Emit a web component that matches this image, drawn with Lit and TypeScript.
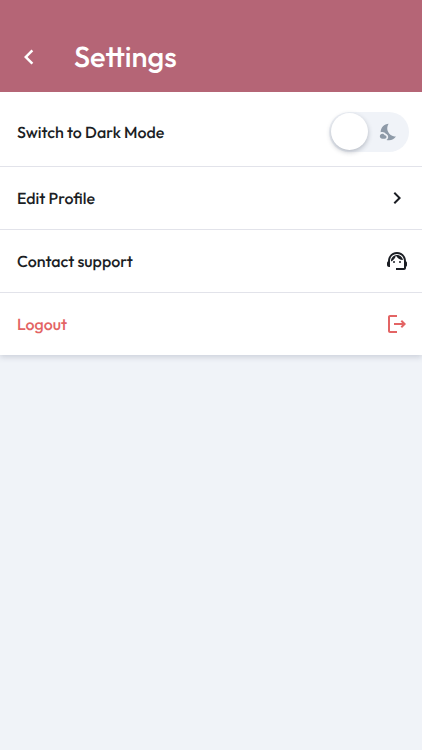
import { LitElement, html, css } from "lit";
import { customElement, state } from "lit/decorators.js";

@customElement("app-root")
export class AppRoot extends LitElement {
  static styles = css`
    :host {
      display: block;
      min-height: 100vh;
      background: #f0f3f8;
      color: #1b1e24;
      font-family: Outfit, Lato, "Liberation Sans", sans-serif;
      text-rendering: geometricPrecision;
    }
    * {
      box-sizing: border-box;
    }
    svg {
      display: block;
      fill: currentColor;
    }
    .header {
      position: relative;
      display: flex;
      align-items: center;
      gap: 30px;
      padding: 38px 14px 16px;
      background: #b56576;
      color: #fff;
      z-index: 1;
    }
    button {
      font: inherit;
      text-rendering: inherit;
      border: 0;
      background: none;
      color: inherit;
      cursor: pointer;
    }
    .back {
      padding: 0;
    }
    .title {
      margin: 0;
      font-size: 29px;
      line-height: 38px;
      font-weight: 500;
    }
    .list {
      margin: 0;
      padding: 0;
      list-style: none;
      background: #fff;
      box-shadow: 0 2px 6px rgba(50, 60, 90, 0.2);
    }
    .item + .item {
      border-top: 1px solid #e2e3ea;
    }
    .row {
      display: flex;
      align-items: center;
      justify-content: space-between;
      width: 100%;
      min-height: 62px;
      padding: 2px 13px 0 17px;
      font-size: 16px;
      line-height: 24px;
      font-weight: 500;
      text-align: left;
    }
    .tall {
      min-height: 74px;
      padding-top: 8px;
      cursor: pointer;
    }
    .danger {
      color: #e36464;
    }
    .row > svg {
      margin-bottom: 2px;
    }
    .switch {
      position: relative;
      display: flex;
      align-items: center;
      justify-content: flex-end;
      width: 80px;
      height: 40px;
      margin-bottom: 2px;
      padding-right: 10px;
      border-radius: 20px;
      background: #f0f3f8;
      color: #8e9aa8;
    }
    .switch input {
      position: absolute;
      inset: 0;
      width: 100%;
      height: 100%;
      margin: 0;
      opacity: 0;
      cursor: pointer;
    }
    .thumb {
      position: absolute;
      top: 1px;
      left: 2px;
      width: 37px;
      height: 37px;
      border-radius: 50%;
      background: #fff;
      box-shadow: 0 2px 5px rgba(40, 50, 70, 0.3);
      pointer-events: none;
    }
    .switch input:checked + .thumb {
      left: 41px;
    }
  `;

  @state() private dark = false;

  private toggle(e: Event) {
    this.dark = (e.target as HTMLInputElement).checked;
  }

  render() {
    return html`
      <header class="header">
        <button class="back" aria-label="Back">
          <svg width="30" height="30" viewBox="0 0 24 24">
            <path d="M15.41 7.41 14 6l-6 6 6 6 1.41-1.41L10.83 12z" />
          </svg>
        </button>
        <h1 class="title">Settings</h1>
      </header>
      <ul class="list">
        <li class="item">
          <label class="row tall">
            Switch to Dark Mode
            <span class="switch">
              <input type="checkbox" .checked=${this.dark} @change=${this.toggle} />
              <span class="thumb"></span>
              <svg width="20" height="20" viewBox="0 0 24 24">
                <path
                  d="M11.1 12.08c-2.33-4.51-.5-8.48.53-10.07C6.27 2.2 1.98 6.59 1.98 12c0 .14.02.28.02.42.62-.27 1.29-.42 2-.42 1.66 0 3.18.83 4.1 2.15C9.77 14.63 11 16.17 11 18c0 1.52-.87 2.83-2.12 3.51.98.32 2.03.5 3.11.5 3.5 0 6.58-1.8 8.37-4.52-2.36.23-6.98-.97-9.26-5.41z"
                />
                <path
                  d="M7 16h-.18C6.4 14.84 5.3 14 4 14c-1.66 0-3 1.34-3 3s1.34 3 3 3h3c1.1 0 2-.9 2-2s-.9-2-2-2z"
                />
              </svg>
            </span>
          </label>
        </li>
        <li class="item">
          <button class="row">
            Edit Profile
            <svg width="24" height="24" viewBox="0 0 24 24">
              <path d="M10 6 8.59 7.41 13.17 12l-4.58 4.59L10 18l6-6z" />
            </svg>
          </button>
        </li>
        <li class="item">
          <button class="row">
            Contact support
            <svg width="24" height="24" viewBox="0 0 24 24">
              <path
                d="M21 12.22C21 6.73 16.74 3 12 3c-4.69 0-9 3.65-9 9.28-.6.34-1 .98-1 1.72v2c0 1.1.9 2 2 2h1v-6.1c0-3.87 3.13-7 7-7s7 3.13 7 7V19h-8v2h8c1.1 0 2-.9 2-2v-1.22c.59-.31 1-.92 1-1.64v-2.3c0-.7-.41-1.31-1-1.62z"
              />
              <circle cx="9" cy="13" r="1" />
              <circle cx="15" cy="13" r="1" />
              <path
                d="M18 11.03C17.52 8.18 15.04 6 12.05 6c-3.03 0-6.29 2.51-6.03 6.45 2.47-1.01 4.33-3.21 4.86-5.89 1.31 2.63 4 4.44 7.12 4.47z"
              />
            </svg>
          </button>
        </li>
        <li class="item">
          <button class="row danger">
            Logout
            <svg width="24" height="24" viewBox="0 0 24 24">
              <path d="m17 8-1.41 1.41L17.17 11H9v2h8.17l-1.58 1.58L17 16l4-4z" />
              <path d="M5 5h7V3H5c-1.1 0-2 .9-2 2v14c0 1.1.9 2 2 2h7v-2H5z" />
            </svg>
          </button>
        </li>
      </ul>
    `;
  }
}
